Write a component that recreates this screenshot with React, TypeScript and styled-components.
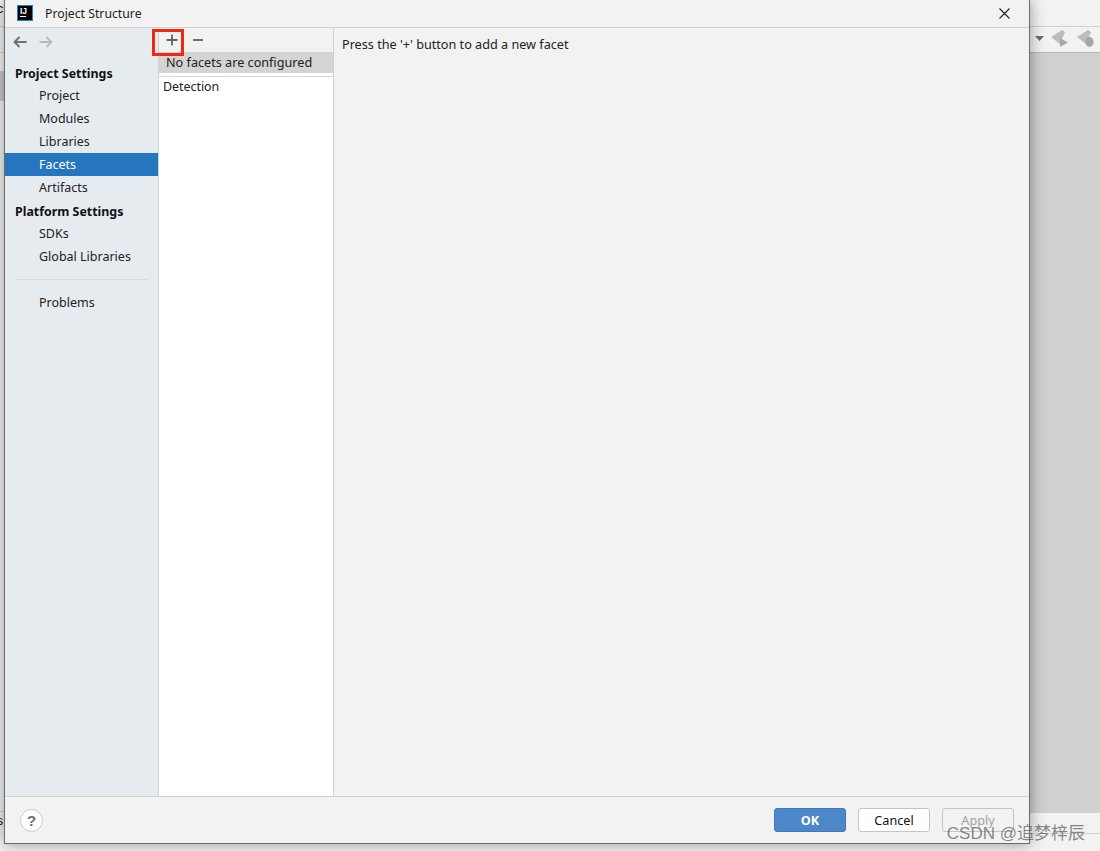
import styled, { createGlobalStyle } from "styled-components";

const GlobalStyle = createGlobalStyle`
  html, body { margin: 0; padding: 0; background: #f2f2f2; }
  body { font-family: "Noto Sans", "Noto Sans CJK SC", sans-serif; font-size: 12.65px; color: #151515; }
`;

const settingsItems = ["Project", "Modules", "Libraries", "Facets", "Artifacts"];
const platformItems = ["SDKs", "Global Libraries"];

const App = () => {
  return (
    <Desktop>
      <GlobalStyle />
      <LeftStrip>
        <StripBand $h={27} $line><ClippedChar>c</ClippedChar></StripBand>
        <StripBand $h={26} $line />
        <StripBand $h={18} />
        <StripBand $h={30} $bg="#c9c9c9" />
        <StripBand $h={711} $line />
        <StripBand $h={39}><ClippedChar>s</ClippedChar></StripBand>
      </LeftStrip>

      <Dialog>
        <TitleBar>
          <AppLogo><LogoText>IJ</LogoText><LogoBar /></AppLogo>
          <TitleText>Project Structure</TitleText>
          <CloseButton>
            <svg width="11" height="11" viewBox="0 0 11 11">
              <path d="M0.5 0.5 L10.5 10.5 M10.5 0.5 L0.5 10.5" stroke="#222" strokeWidth="1.1" fill="none" />
            </svg>
          </CloseButton>
        </TitleBar>

        <Body>
          <Sidebar>
            <NavArrows>
              <svg width="14" height="12" viewBox="0 0 14 12">
                <path d="M13.5 6 H1.5 M6.5 1 L1.5 6 L6.5 11" stroke="#6e6e6e" strokeWidth="1.8" fill="none" />
              </svg>
              <svg width="14" height="12" viewBox="0 0 14 12">
                <path d="M0.5 6 H12.5 M7.5 1 L12.5 6 L7.5 11" stroke="#b9b9b9" strokeWidth="1.8" fill="none" />
              </svg>
            </NavArrows>
            <SectionTitle $h={22}>Project Settings</SectionTitle>
            {settingsItems.map((item) => (
              <NavItem key={item} $active={item === "Facets"}>{item}</NavItem>
            ))}
            <SectionTitle $h={23} $pushDown>Platform Settings</SectionTitle>
            {platformItems.map((item) => (
              <NavItem key={item}>{item}</NavItem>
            ))}
            <NavSeparator />
            <NavItem>Problems</NavItem>
          </Sidebar>

          <FacetColumn>
            <FacetToolbar>
              <ToolIcon>
                <svg width="12" height="12" viewBox="0 0 12 12">
                  <path d="M6 0.5 V11.5 M0.5 6 H11.5" stroke="#626262" strokeWidth="1.8" fill="none" />
                </svg>
              </ToolIcon>
              <ToolIcon>
                <svg width="12" height="12" viewBox="0 0 12 12">
                  <path d="M1 6 H11" stroke="#626262" strokeWidth="1.8" fill="none" />
                </svg>
              </ToolIcon>
            </FacetToolbar>
            <FacetSelected>No facets are configured</FacetSelected>
            <FacetDivider />
            <FacetRow>Detection</FacetRow>
            <RedMark />
          </FacetColumn>

          <MainPanel>Press the '+' button to add a new facet</MainPanel>
        </Body>

        <Footer>
          <HelpButton>?</HelpButton>
          <FooterButtons>
            <DialogButton $kind="primary">OK</DialogButton>
            <DialogButton>Cancel</DialogButton>
            <DialogButton $kind="disabled">Apply</DialogButton>
          </FooterButtons>
        </Footer>
      </Dialog>

      <RightStrip>
        <StripBand $h={27} $line />
        <IdeToolbar>
          <CaretIcon width="9" height="5" viewBox="0 0 9 5">
            <path d="M0 0 H9 L4.5 5 Z" fill="#6a6a6a" />
          </CaretIcon>
          <svg width="17" height="17" viewBox="0 0 17 17">
            <path d="M0 7 L11 0 L14 2 L11 9 L9 14 L5 11 Z" fill="#bcbcbc" />
            <path d="M9 8 L17 12.5 L9 17 Z" fill="#a9a9a9" />
          </svg>
          <svg width="17" height="17" viewBox="0 0 17 17">
            <path d="M0 7 L11 0 L14 2 L11 9 L9 14 L5 11 Z" fill="#bcbcbc" />
            <ellipse cx="12.5" cy="12" rx="4" ry="5" fill="#a6a6a6" />
          </svg>
        </IdeToolbar>
        <IdeCanvas />
        <StripBand $h={21} $line />
        <StripBand $h={17} />
      </RightStrip>

      <Watermark>CSDN @追梦梓辰</Watermark>
    </Desktop>
  );
};
export default App;


const Desktop = styled.div`
  position: relative;
  display: flex;
  width: 1100px;
  height: 851px;
  overflow: hidden;
  background: #f2f2f2;
`;

const LeftStrip = styled.div`
  display: flex;
  flex-direction: column;
  width: 4px;
  flex-shrink: 0;
`;

const RightStrip = styled.div`
  display: flex;
  flex-direction: column;
  flex: 1;
  min-width: 0;
`;

const StripBand = styled.div<{ $h: number; $bg?: string; $line?: boolean }>`
  height: ${(p) => p.$h}px;
  flex-shrink: 0;
  box-sizing: border-box;
  overflow: hidden;
  background: ${(p) => p.$bg || "#f2f2f2"};
  border-bottom: ${(p) => (p.$line ? "1px solid #d0d0d0" : "none")};
`;

const ClippedChar = styled.span`
  display: block;
  margin-left: -4px;
  padding-top: 2px;
  font-family: "Liberation Mono", monospace;
  font-size: 13px;
  color: #222;
`;

const IdeToolbar = styled.div`
  display: flex;
  align-items: center;
  justify-content: flex-end;
  gap: 9px;
  height: 26px;
  flex-shrink: 0;
  box-sizing: border-box;
  padding: 0 6px 2px 5px;
  background: #f2f2f2;
  border-bottom: 1px solid #b4b4b4;
`;

const CaretIcon = styled.svg`
  margin-right: -2px;
`;

const IdeCanvas = styled.div`
  flex: 1;
  background: #d0d0d0;
`;

const Dialog = styled.div`
  position: relative;
  z-index: 1;
  display: flex;
  flex-direction: column;
  flex-shrink: 0;
  width: 1026px;
  height: 844px;
  box-sizing: border-box;
  background: #f2f2f2;
  border: 1px solid #6c6c6c;
  border-top: none;
  box-shadow: 0 0 14px rgba(0, 0, 0, 0.38);
`;

const TitleBar = styled.div`
  display: flex;
  align-items: center;
  height: 28px;
  flex-shrink: 0;
  box-sizing: border-box;
  padding: 0 19px 1px 12px;
  border-bottom: 1px solid #d1d1d1;
`;

const AppLogo = styled.div`
  display: flex;
  flex-direction: column;
  width: 16px;
  height: 16px;
  box-sizing: border-box;
  padding: 1px 2px;
  background: #000;
  border: 1px solid #1c7fe0;
`;

const LogoText = styled.span`
  font-family: "Liberation Sans", sans-serif;
  font-size: 8.5px;
  line-height: 9px;
  font-weight: 700;
  color: #fff;
`;

const LogoBar = styled.span`
  display: block;
  width: 6px;
  height: 1px;
  background: #fff;
`;

const TitleText = styled.span`
  flex: 1;
  margin-left: 12px;
  font-size: 12.25px;
  color: #222;
`;

const CloseButton = styled.div`
  display: flex;
  line-height: 0;
`;

const Body = styled.div`
  display: flex;
  flex: 1;
  min-height: 0;
`;

const Sidebar = styled.div`
  display: flex;
  flex-direction: column;
  width: 154px;
  flex-shrink: 0;
  box-sizing: border-box;
  background: #e6ebf0;
  border-right: 1px solid #d1d1d1;
`;

const NavArrows = styled.div`
  display: flex;
  align-items: center;
  gap: 12px;
  height: 34px;
  flex-shrink: 0;
  box-sizing: border-box;
  padding: 0 0 6px 8px;
`;

const SectionTitle = styled.div<{ $h: number; $pushDown?: boolean }>`
  display: flex;
  align-items: center;
  height: ${(p) => p.$h}px;
  box-sizing: border-box;
  padding: ${(p) => (p.$pushDown ? "1px" : "0")} 0 0 10px;
  font-size: 12.4px;
  font-weight: 700;
  color: #111;
`;

const NavItem = styled.div<{ $active?: boolean }>`
  display: flex;
  align-items: center;
  height: 23px;
  box-sizing: border-box;
  padding: 0 0 0 34px;
  font-size: 12.5px;
  color: ${(p) => (p.$active ? "#fff" : "#222")};
  background: ${(p) => (p.$active ? "#2675bf" : "transparent")};
`;

const NavSeparator = styled.div`
  height: 1px;
  margin: 11px 10px;
  background: #d8dde2;
`;

const FacetColumn = styled.div`
  position: relative;
  display: flex;
  flex-direction: column;
  width: 175px;
  flex-shrink: 0;
  box-sizing: border-box;
  background: #fff;
  border-right: 1px solid #d1d1d1;
`;

const FacetToolbar = styled.div`
  display: flex;
  align-items: center;
  gap: 2px;
  height: 24px;
  flex-shrink: 0;
  background: #f2f2f2;
`;

const ToolIcon = styled.div`
  display: flex;
  align-items: center;
  justify-content: center;
  width: 24px;
  height: 24px;
  &:first-child { margin-left: 1px; }
`;

const FacetSelected = styled.div`
  display: flex;
  align-items: center;
  height: 21px;
  flex-shrink: 0;
  box-sizing: border-box;
  padding: 0 0 2px 7px;
  background: #d4d4d4;
  color: #222;
`;

const FacetDivider = styled.div`
  height: 1px;
  margin-top: 3px;
  background: #d4d4d4;
  flex-shrink: 0;
`;

const FacetRow = styled.div`
  display: flex;
  align-items: center;
  height: 20px;
  box-sizing: border-box;
  padding: 0 0 2px 4px;
  font-size: 12.4px;
  color: #222;
`;

const RedMark = styled.div`
  position: absolute;
  left: -7px;
  top: 1px;
  width: 32px;
  height: 27px;
  box-sizing: border-box;
  border: 3px solid #f0280f;
`;

const MainPanel = styled.div`
  flex: 1;
  padding: 7px 8px;
  line-height: 18px;
  color: #222;
`;

const Footer = styled.div`
  display: flex;
  align-items: center;
  justify-content: space-between;
  height: 47px;
  flex-shrink: 0;
  box-sizing: border-box;
  padding: 0 15px 0 15px;
  border-top: 1px solid #d1d1d1;
`;

const HelpButton = styled.div`
  display: flex;
  align-items: center;
  justify-content: center;
  width: 23px;
  height: 23px;
  box-sizing: border-box;
  border: 1px solid #c8c8c8;
  border-radius: 50%;
  background: #fff;
  font-family: "Liberation Sans", sans-serif;
  font-size: 15px;
  font-weight: 700;
  color: #6e6e6e;
`;

const FooterButtons = styled.div`
  display: flex;
  gap: 12px;
`;

const DialogButton = styled.div<{ $kind?: "primary" | "disabled" }>`
  display: flex;
  align-items: center;
  justify-content: center;
  width: 72px;
  height: 24px;
  box-sizing: border-box;
  border-radius: 3px;
  border: 1px solid ${(p) => (p.$kind === "primary" ? "#4079b5" : "#c4c4c4")};
  background: ${(p) => (p.$kind === "primary" ? "#4b87c9" : p.$kind === "disabled" ? "#f2f2f2" : "#fff")};
  color: ${(p) => (p.$kind === "primary" ? "#fff" : p.$kind === "disabled" ? "#a3a3a3" : "#111")};
  font-weight: ${(p) => (p.$kind === "primary" ? 700 : 400)};
`;

const Watermark = styled.div`
  position: absolute;
  z-index: 2;
  right: 15px;
  bottom: 6px;
  font-family: "Liberation Sans", "Noto Sans CJK SC", sans-serif;
  font-size: 17px;
  line-height: 22px;
  color: rgba(90, 90, 90, 0.72);
`;
